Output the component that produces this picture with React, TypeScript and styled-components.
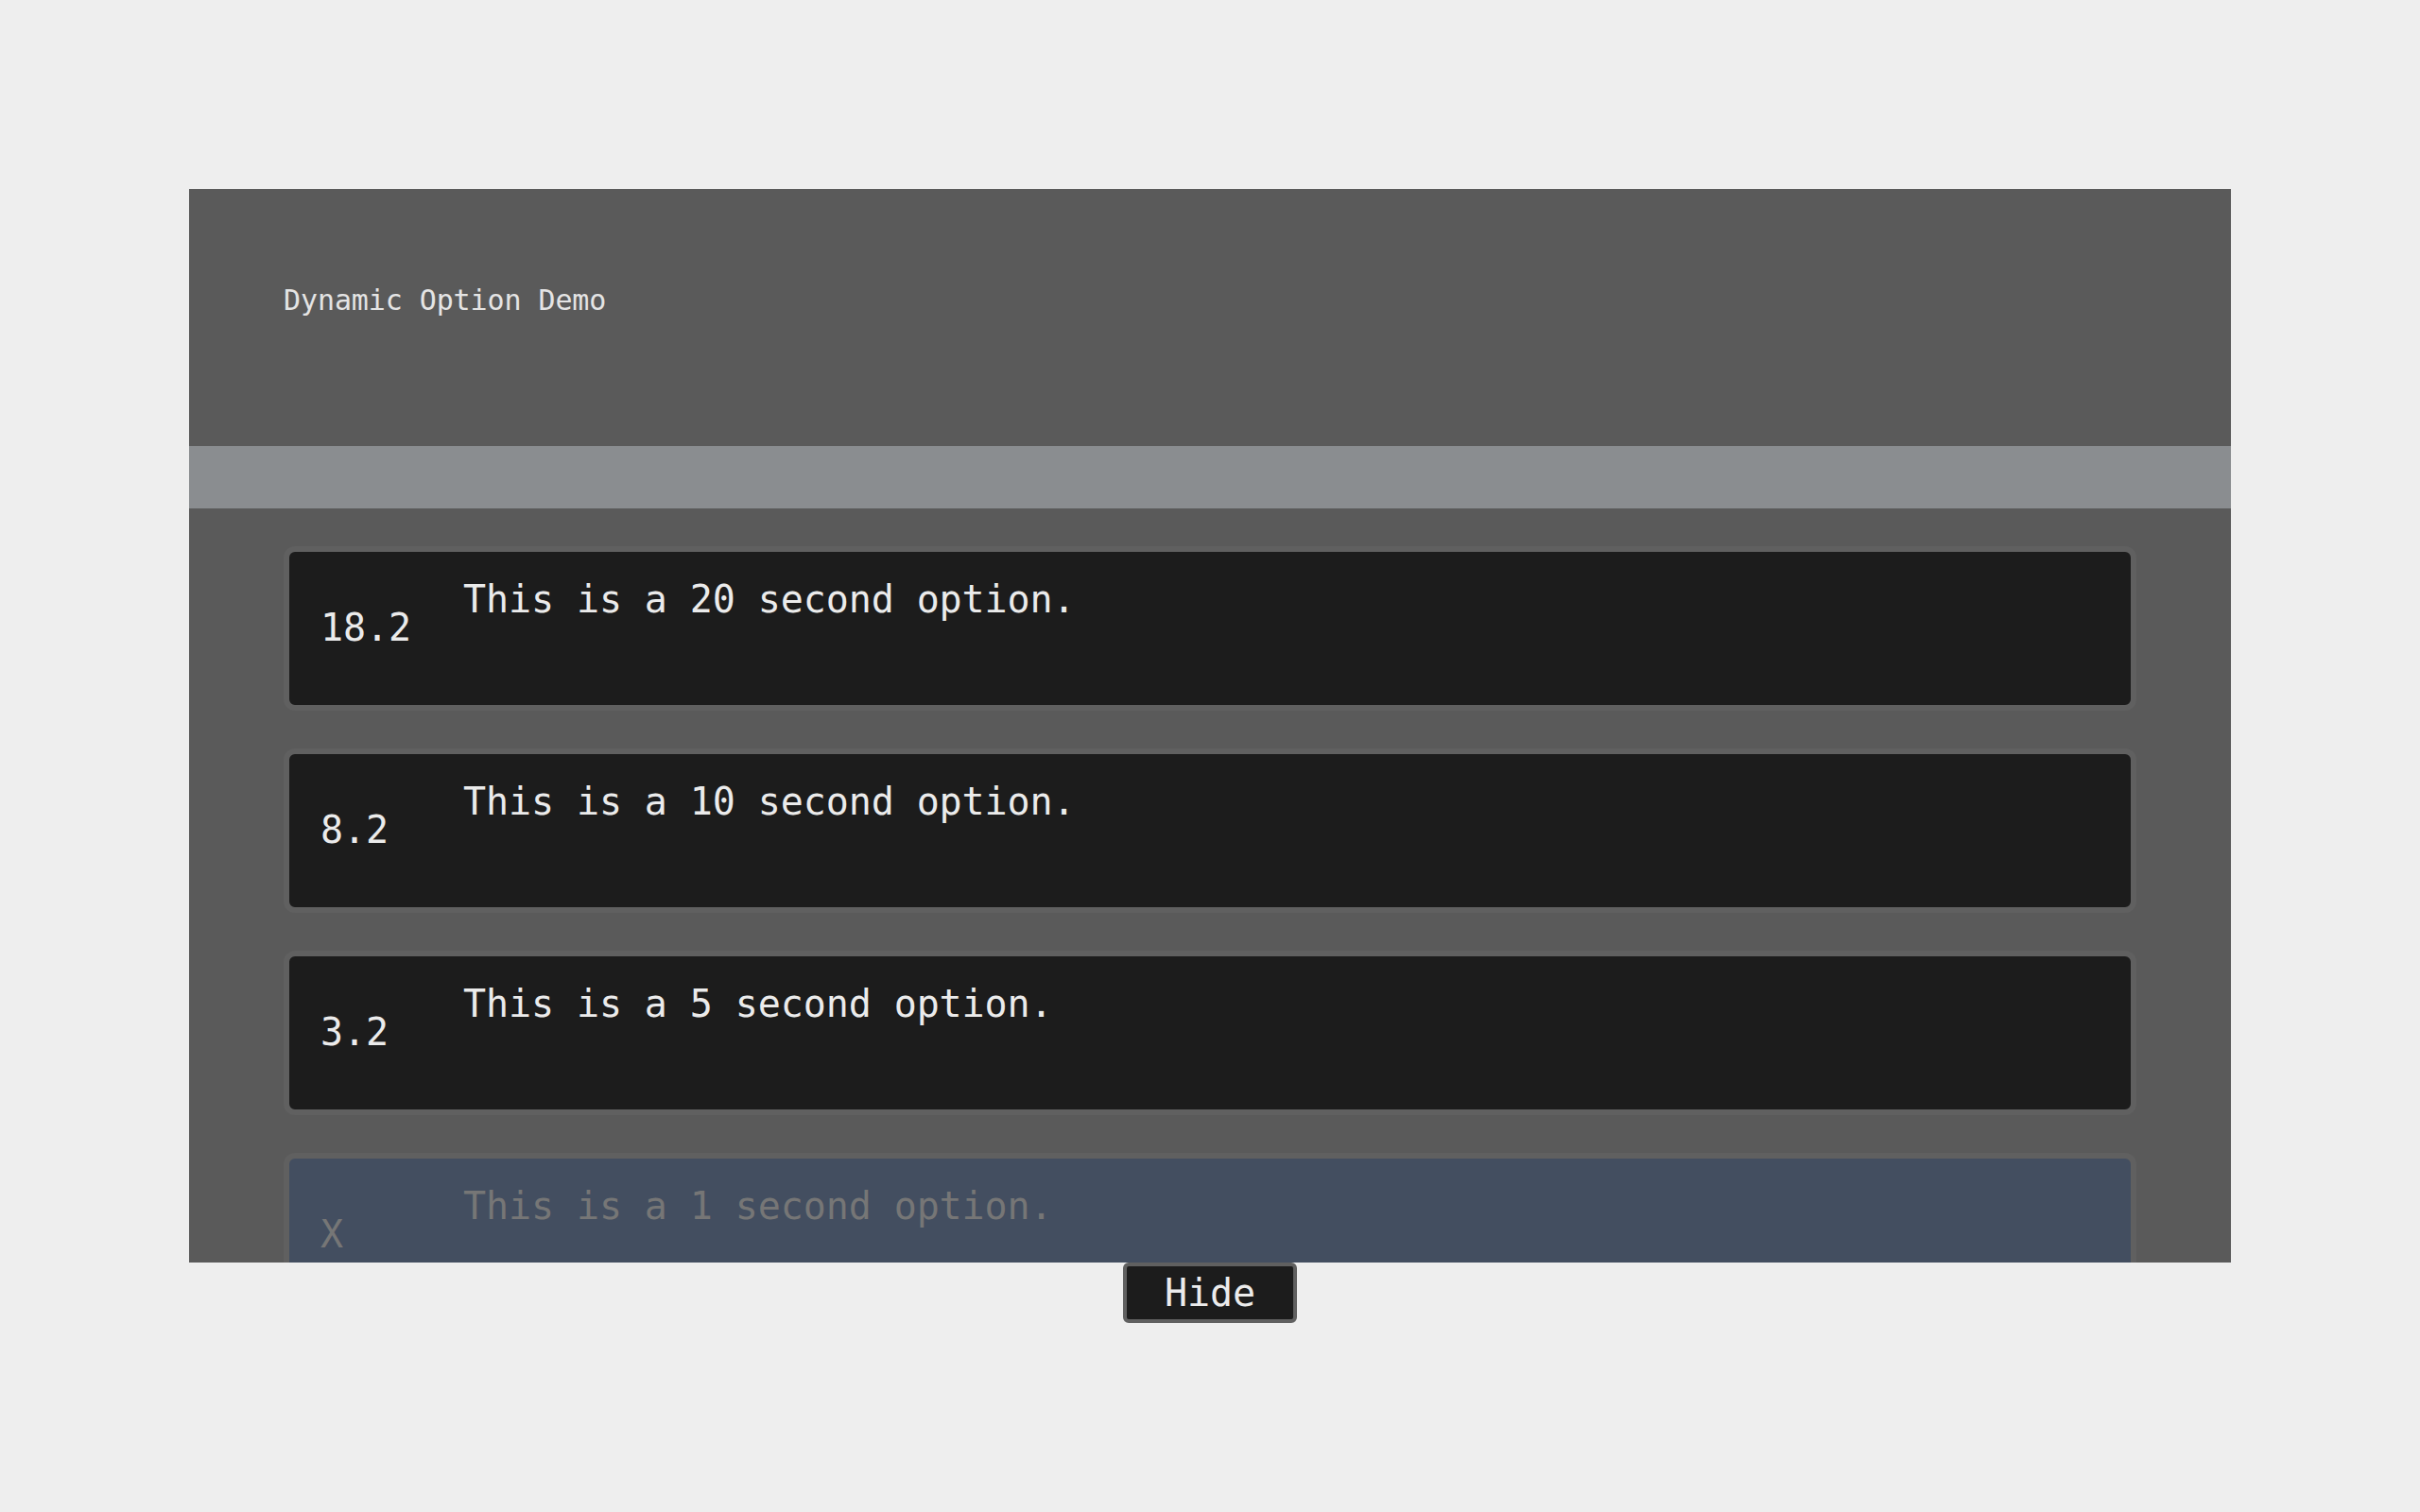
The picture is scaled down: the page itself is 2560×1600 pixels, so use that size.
import React from "react";
import styled, { createGlobalStyle } from "styled-components";

const GlobalStyle = createGlobalStyle`
  html, body {
    margin: 0;
    padding: 0;
    background: #eeeeee;
    font-family: "DejaVu Sans Mono", "Liberation Mono", monospace;
  }
`;

const Page = styled.div`
  display: flex;
  flex-direction: column;
  align-items: center;
  padding: 200px 200px 0;
`;

const Panel = styled.section`
  width: 100%;
  height: 1136px;
  background: #5a5a5a;
  overflow: hidden;
  display: flex;
  flex-direction: column;
`;

const Header = styled.header`
  height: 272px;
  flex: none;
  box-sizing: border-box;
  padding: 100px 100px 0;
`;

const Title = styled.h1`
  margin: 0;
  font-size: 30px;
  font-weight: normal;
  line-height: 35px;
  color: #e4e4e4;
  letter-spacing: -0.1px;
`;

const Bar = styled.div`
  height: 66px;
  flex: none;
  background: #8a8d90;
`;

const OptionList = styled.div`
  display: flex;
  flex-direction: column;
  gap: 40px;
  padding: 40px 100px;
`;

const Option = styled.div<{ $expired?: boolean }>`
  flex: none;
  box-sizing: border-box;
  height: 174px;
  border: 6px solid #606060;
  border-radius: 12px;
  background: ${(p) => (p.$expired ? "#434e60" : "#1c1c1c")};
  color: ${(p) => (p.$expired ? "#767676" : "#ebebeb")};
  display: grid;
  grid-template-columns: 151px 1fr;
  padding-left: 33px;
  font-size: 40px;
  line-height: 46px;
  letter-spacing: -0.1px;
`;

const Timer = styled.span`
  align-self: center;
  padding-bottom: 2px;
`;

const OptionText = styled.span`
  align-self: start;
  margin-top: 27px;
`;

const HideButton = styled.button`
  font-family: "DejaVu Sans Mono", "Liberation Mono", monospace;
  font-size: 40px;
  line-height: 46px;
  letter-spacing: -0.1px;
  padding: 5px 40px;
  background: #1c1c1c;
  color: #ebebeb;
  border: 4px solid #606060;
  border-radius: 6px;
  cursor: pointer;
`;

const options = [
  { time: "18.2", text: "This is a 20 second option." },
  { time: "8.2", text: "This is a 10 second option." },
  { time: "3.2", text: "This is a 5 second option." },
  { time: "X", text: "This is a 1 second option.", expired: true },
];

export default function App() {
  return (
    <>
      <GlobalStyle />
      <Page>
        <Panel>
          <Header>
            <Title>Dynamic Option Demo</Title>
          </Header>
          <Bar />
          <OptionList>
            {options.map((o) => (
              <Option key={o.text} $expired={o.expired}>
                <Timer>{o.time}</Timer>
                <OptionText>{o.text}</OptionText>
              </Option>
            ))}
          </OptionList>
        </Panel>
        <HideButton>Hide</HideButton>
      </Page>
    </>
  );
}
